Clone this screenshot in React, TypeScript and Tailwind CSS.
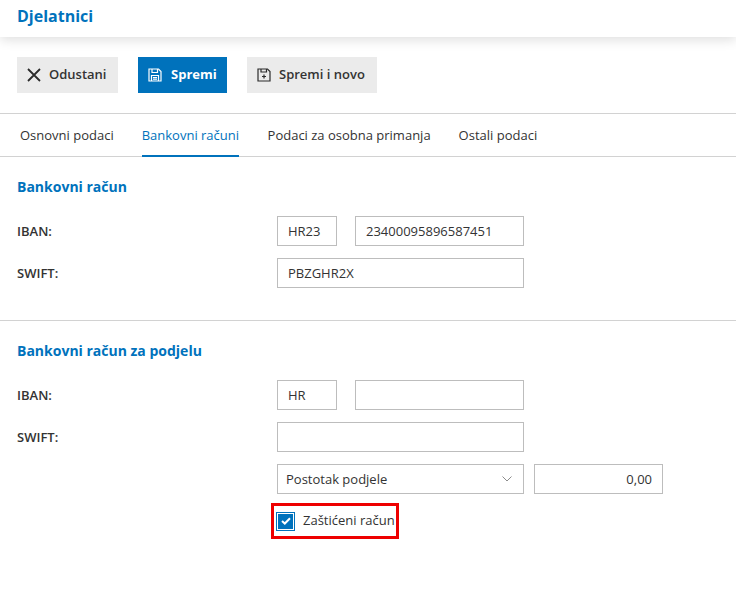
import React from "react";

const inputBase = "h-[30px] border border-[#bdbdbd] bg-white px-[10px] flex items-center text-[13px] text-[#333]";

function CloseIcon() {
  return (
    <svg width="14" height="14" viewBox="0 0 14 14" fill="none" stroke="#2b2b2b" strokeWidth="1.8">
      <path d="M1 1 L13 13 M13 1 L1 13" />
    </svg>
  );
}

function SaveIcon({ color, plus }: { color: string; plus?: boolean }) {
  return (
    <svg width="14" height="14" viewBox="0 0 14 14" fill="none" stroke={color} strokeWidth="1.2">
      <path d="M1 1 H10.5 L13 3.5 V13 H1 Z" />
      {plus ? (
        <>
          <path d="M4 1 V4 H9.5 V1" />
          <path d="M7 6.5 V10.5 M5 8.5 H9" />
        </>
      ) : (
        <>
          <path d="M4 1 V4.5 H9.5 V1" />
          <path d="M3.5 13 V7.5 H10.5 V13" />
          <path d="M5 9.5 H9 M5 11.2 H9" />
        </>
      )}
    </svg>
  );
}

function Row({ label, children }: { label: string; children: React.ReactNode }) {
  return (
    <div className="flex items-center h-[30px]">
      <div className="w-[260px] pt-[2px] text-[13px] font-semibold text-[#333]">{label}</div>
      {children}
    </div>
  );
}

export default function App() {
  return (
    <div className="w-[736px] h-[600px] bg-white overflow-hidden font-['Open_Sans',sans-serif] text-[#333]">
      <header className="h-[37px] bg-white shadow-[0_3px_12px_rgba(0,0,0,0.13)] px-[17px] flex items-start">
        <h1 className="text-[16px] leading-[18px] mt-[7px] font-bold text-[#0072bc]">Djelatnici</h1>
      </header>

      <div className="flex gap-[20px] px-[17px] pt-[20px] pb-[20px] border-b border-[#d2d2d2]">
        <button className="h-[36px] w-[101px] bg-[#ebebeb] flex items-center pl-[10px] gap-[8px] text-[13px] font-semibold text-[#333]">
          <CloseIcon />
          Odustani
        </button>
        <button className="h-[36px] w-[89px] bg-[#0072bc] flex items-center pl-[10px] gap-[9px] text-[13px] font-bold text-white">
          <SaveIcon color="#ffffff" />
          Spremi
        </button>
        <button className="h-[36px] w-[130px] bg-[#ebebeb] flex items-center pl-[10px] gap-[8px] text-[13px] font-semibold text-[#333]">
          <SaveIcon color="#2b2b2b" plus />
          Spremi i novo
        </button>
      </div>

      <nav className="h-[43px] border-b border-[#d2d2d2] flex pl-[20px] text-[13px]">
        <div className="h-[43px] flex items-center">Osnovni podaci</div>
        <div className="h-[43px] ml-[28px] flex items-center pt-[2px] text-[#0072bc] border-b-2 border-[#0072bc]">Bankovni računi</div>
        <div className="h-[43px] ml-[28.5px] flex items-center">Podaci za osobna primanja</div>
        <div className="h-[43px] ml-[28px] flex items-center">Ostali podaci</div>
      </nav>

      <section className="px-[17px] pt-[21px] pb-[32px] border-b border-[#d2d2d2]">
        <h2 className="text-[14px] leading-[18px] font-bold text-[#0072bc]">Bankovni račun</h2>
        <div className="mt-[20px] flex flex-col gap-[12px]">
          <Row label="IBAN:">
            <div className={`${inputBase} w-[60px]`}><span className="pt-[1px]">HR23</span></div>
            <div className={`${inputBase} w-[169px] ml-[18px]`}><span className="pt-[1px]">23400095896587451</span></div>
          </Row>
          <Row label="SWIFT:">
            <div className={`${inputBase} w-[247px]`}><span className="pt-[1px]">PBZGHR2X</span></div>
          </Row>
        </div>
      </section>

      <section className="px-[17px] pt-[21px]">
        <h2 className="text-[14px] leading-[18px] font-bold text-[#0072bc]">Bankovni račun za podjelu</h2>
        <div className="mt-[20px] flex flex-col gap-[12px]">
          <Row label="IBAN:">
            <div className={`${inputBase} w-[60px]`}><span className="pt-[1px]">HR</span></div>
            <div className={`${inputBase} w-[169px] ml-[18px]`}></div>
          </Row>
          <Row label="SWIFT:">
            <div className={`${inputBase} w-[247px]`}></div>
          </Row>
          <div className="flex pl-[260px] gap-[10px]">
            <div className={`${inputBase} w-[247px] justify-between !pl-[8px] !pr-[11px]`}>
              <span className="pt-[1px]">Postotak podjele</span>
              <svg width="10" height="6" viewBox="0 0 10 6" fill="none" stroke="#8c8c8c" strokeWidth="1">
                <path d="M0.5 0.5 L5 5 L9.5 0.5" />
              </svg>
            </div>
            <div className={`${inputBase} w-[129px] justify-end`}><span className="pt-[1px]">0,00</span></div>
          </div>
        </div>
        <div className="ml-[254px] mt-[9px] w-[128px] h-[36px] border-[3px] border-[#ee0000] flex items-center pl-[3px] gap-[9px] text-[13px]">
          <div className="w-[17px] h-[17px] bg-[#0072bc] border border-white outline outline-1 outline-[#0072bc] flex items-center justify-center shrink-0">
            <svg width="10" height="8" viewBox="0 0 10 8" fill="none" stroke="#fff" strokeWidth="2">
              <path d="M1 4 L3.8 6.5 L9 1.2" />
            </svg>
          </div>
          <span className="whitespace-nowrap">Zaštićeni račun</span>
        </div>
      </section>
    </div>
  );
}
